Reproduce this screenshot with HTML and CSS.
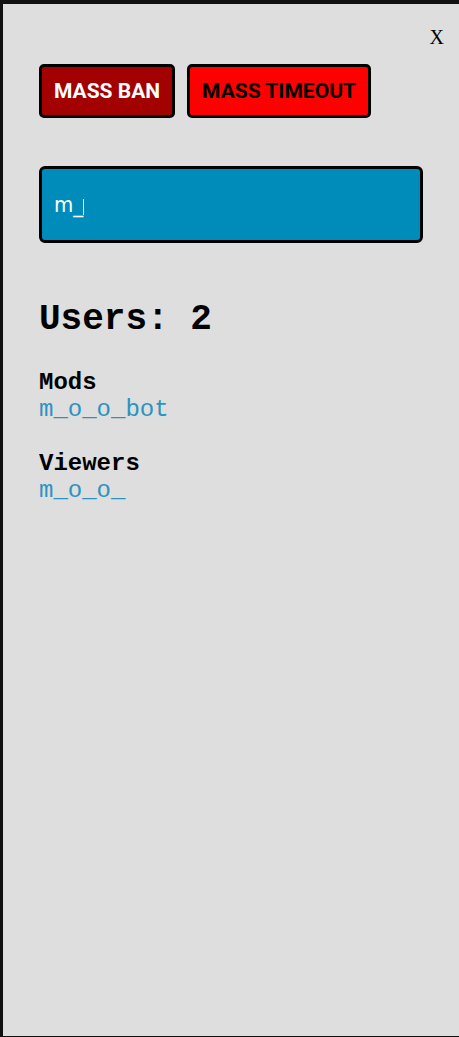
FILE: index.html
```html
<!DOCTYPE html>
<html lang="en">
<head>
<meta charset="utf-8">
<title>Mass actions</title>
<link rel="stylesheet" href="styles.css">
</head>
<body>
<div class="panel">
  <button class="close" type="button">X</button>
  <div class="actions">
    <button class="btn btn-ban" type="button">MASS BAN</button>
    <button class="btn btn-timeout" type="button">MASS TIMEOUT</button>
  </div>
  <div class="search" role="textbox"><span class="search-text">m_</span><span class="caret"></span></div>
  <h2 class="count">Users: 2</h2>
  <div class="group">
    <div class="group-title">Mods</div>
    <div class="user">m_o_o_bot</div>
  </div>
  <div class="group">
    <div class="group-title">Viewers</div>
    <div class="user">m_o_o_</div>
  </div>
</div>
</body>
</html>
```
FILE: styles.css
```css
html, body {
  margin: 0;
  padding: 0;
  background: #111111;
}

.panel {
  position: relative;
  box-sizing: border-box;
  margin: 4px 0 0 3px;
  height: 1032px;
  background: #dedede;
  padding: 60px 36px 0;
}

.close {
  position: absolute;
  top: 22px;
  right: 15px;
  margin: 0;
  padding: 0;
  border: 0;
  background: none;
  font-family: "Liberation Serif", serif;
  font-size: 20px;
  line-height: normal;
  color: #000;
  cursor: pointer;
}

.actions {
  display: flex;
  gap: 12px;
}

.btn {
  box-sizing: border-box;
  height: 54px;
  margin: 0;
  padding: 0 12px;
  border: 3px solid #000;
  border-radius: 5px;
  font-family: Roboto, "DejaVu Sans", sans-serif;
  font-weight: bold;
  font-size: 21px;
  cursor: pointer;
}

.btn-ban {
  background: #a30000;
  color: #fff;
}

.btn-timeout {
  background: #ff0000;
  color: #000;
}

.search {
  box-sizing: border-box;
  display: flex;
  align-items: center;
  margin-top: 48px;
  height: 77px;
  padding: 0 12px;
  border: 3px solid #000;
  border-radius: 6px;
  background: #008cba;
  color: #fff;
  font-family: "DejaVu Sans Condensed", "DejaVu Sans", sans-serif;
  font-size: 22px;
}

.caret {
  display: inline-block;
  width: 1px;
  height: 16px;
  margin-left: 0;
  margin-top: 4px;
  background: #fff;
}

.count {
  margin: 56px 0 0;
  font-family: "Liberation Mono", monospace;
  font-weight: bold;
  font-size: 36px;
  line-height: normal;
  color: #000;
}

.group {
  margin-top: 29px;
  font-family: "Liberation Mono", monospace;
  font-size: 24px;
  line-height: normal;
}

.group + .group {
  margin-top: 27px;
}

.group-title {
  font-weight: bold;
  color: #000;
}

.user {
  color: #2a93c0;
}
```
